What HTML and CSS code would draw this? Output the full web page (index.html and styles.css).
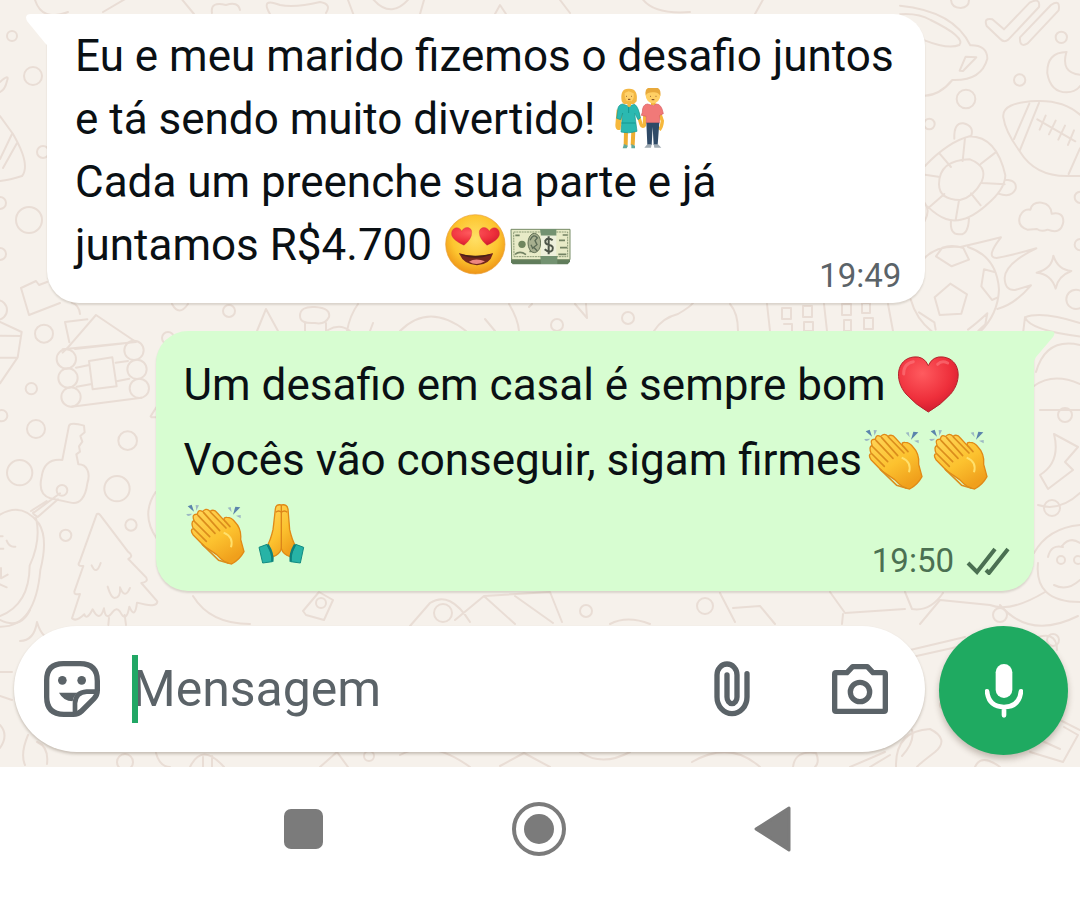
FILE: index.html
```html
<!DOCTYPE html>
<html lang="pt-BR">
<head>
<meta charset="utf-8">
<meta name="viewport" content="width=device-width, initial-scale=1">
<title>Conversa</title>
<link rel="stylesheet" href="styles.css">
</head>
<body>
<svg class="defs" aria-hidden="true">
  <defs>
    <linearGradient id="skin" x1="0" y1="0" x2="0.6" y2="1"><stop offset="0" stop-color="#ffd65c"/><stop offset="0.6" stop-color="#fcc22f"/><stop offset="1" stop-color="#f0a01c"/></linearGradient>
    <radialGradient id="face" cx="0.5" cy="0.4" r="0.6"><stop offset="0" stop-color="#ffe066"/><stop offset="0.65" stop-color="#fdc52f"/><stop offset="1" stop-color="#ee9417"/></radialGradient>
    <radialGradient id="red" cx="0.4" cy="0.3" r="0.8"><stop offset="0" stop-color="#ff5b5f"/><stop offset="0.6" stop-color="#ee2f3b"/><stop offset="1" stop-color="#c8162c"/></radialGradient>
    <symbol id="clap" viewBox="0 0 183 183">
      <g fill="#5b84ac"><path d="M5 7 17 2 24 23Z"/><path d="M163 10 148 8 141 32Z"/></g>
      <g fill="#9db9c4"><path d="M29 3 39 4 31 20Z"/><path d="M1 30Q5 42 19 29Z"/><path d="M125 11 134 9 137 25Z"/><path d="M150 35 164 33 164 43Z"/></g>
      <path fill="url(#skin)" stroke="#e18a16" stroke-width="4" stroke-linejoin="round" d="M24 49Q16 29 34 31Q36 14 50 23Q60 10 72 22Q84 14 94 27L117 52Q110 39 123 40Q137 40 147 54Q167 74 164 106L174 143Q160 168 137 180Q116 179 92 152L54 126L21 92Q11 76 22 74Q13 54 24 49Z"/>
      <g fill="none" stroke="#db8d1c" stroke-width="5" stroke-linecap="round"><path d="M24 75 61 112M24 51 71 98M36 34 87 88M53 26 101 80M73 24 120 72M118 52 132 68"/><path d="M49 121 98 169 126 177"/></g>
      <path d="M113 86Q144 99 135 130" fill="none" stroke="#ffe06c" stroke-width="6"/>
    </symbol>
    <symbol id="pray" viewBox="0 0 183 183">
      <path fill="url(#skin)" stroke="#e18a16" stroke-width="4" d="M91 3Q74-1 73 15Q69 53 66 77Q59 108 48 127L67 158Q86 151 91 134Q96 151 117 158L134 127Q123 108 116 77Q114 51 111 15Q108-1 91 3Z"/>
      <path d="M91 4V134M74 25Q83 17 91 25Q100 17 109 25" stroke="#dc861a" stroke-width="4" fill="none"/>
      <path fill="#27b3a6" stroke="#128b82" stroke-width="3" d="M48 121 24 130 35 177 64 173Q64 148 48 121ZM134 121 158 130 148 177 119 173Q118 148 134 121Z"/>
      <path d="M50 122Q67 149 64 173M132 122Q116 149 119 173" fill="none" stroke="#0d817b" stroke-width="7"/>
    </symbol>
    <symbol id="heart" viewBox="0 0 183 183">
      <path fill="url(#red)" stroke="#b3232c" stroke-width="3" d="M91 174Q52 152 24 120C-12 78-5 16 46 9Q78 5 91 35Q104 5 136 9C187 16 194 78 158 120Q130 152 91 174Z"/>
      <path d="M17 60Q16 29 46 23M119 31Q131 18 149 27" stroke="#ff8589" stroke-width="9" stroke-linecap="round" fill="none" opacity=".5"/>
    </symbol>
    <symbol id="love" viewBox="0 0 183 183">
      <circle cx="91" cy="91" r="89" fill="url(#face)" stroke="#e8a03b" stroke-width="2"/>
      <path fill="url(#red)" stroke="#c93535" d="M57 94Q15 75 20 55C22 38 45 36 50 52C58 34 82 39 80 56Q81 74 57 94ZM126 94Q103 74 103 56C102 39 125 34 133 52C139 36 161 38 163 55Q168 75 126 94Z"/>
      <path d="M42 117Q91 136 144 117Q137 151 96 154Q54 151 42 117Z" fill="#73271d"/>
      <path d="M51 124Q91 139 134 124L137 120Q91 130 46 120Z" fill="#472018"/>
      <path d="M72 143Q92 130 120 142Q95 157 72 143Z" fill="#ee8781"/>
    </symbol>
    <symbol id="money" viewBox="0 0 183 183">
      <path d="M3 133V145L8 151H173L180 143V133Z" fill="#607c5b"/>
      <path d="M3 46H180V137H5Z" fill="#e8ebc7" stroke="#768b67" stroke-width="3"/>
      <path d="M11 54H173V128H12Z" fill="none" stroke="#8d9c77" stroke-width="3" stroke-dasharray="6 2"/>
      <circle cx="36" cy="91" r="11" fill="#70865e"/>
      <path d="M16 64H29M15 121Q30 109 48 122M58 112H75M158 63H171M145 121H169M147 79H165M150 101H171" fill="none" stroke="#738363" stroke-width="5"/>
      <ellipse cx="73" cy="87" rx="19" ry="29" fill="#a7af8f" stroke="#667458" stroke-width="3"/>
      <path d="M60 79Q71 56 82 72L75 80 81 92 71 100 82 111M63 92 69 105" fill="none" stroke="#5c6b55" stroke-width="4"/>
      <path d="M90 45H139V65H93ZM91 126H142V150H93Z" fill="#739271"/>
      <path d="M93 65H139V126H93Z" fill="#edf0dc"/>
      <path d="M128 79Q113 67 106 80Q105 91 117 93Q133 96 127 109Q118 118 104 106M116 67V121" fill="none" stroke="#4d5549" stroke-width="6"/>
    </symbol>
    <symbol id="couple" viewBox="0 0 183 183">
      <path d="M54 129 53 172M76 129 74 172" stroke="#eeae32" stroke-width="12"/>
      <path d="M48 168 60 173 56 181H44ZM70 168 81 173 81 181H70Z" fill="#62a99c"/>
      <path d="M31 65 27 111Q27 122 33 121L39 73M87 69 99 109Q103 119 109 112L111 69M153 69 163 99Q162 116 154 126" stroke="#f6b83c" stroke-width="10" fill="none"/>
      <path d="M43 48Q29 51 29 68L26 91 38 95 44 75 39 132Q61 138 87 130L80 76 90 95 97 90Q92 57 80 49L62 54Z" fill="#2bb9b1" stroke="#189990" stroke-width="2"/>
      <path d="M40 105H82M62 56V75" stroke="#14978f" stroke-width="3"/>
      <path d="M41 40Q35 0 63 2Q91 1 86 40L78 48H47Z" fill="#f3b743"/>
      <path d="M50 15Q48 37 63 43Q80 39 77 16L62 10Z" fill="#ffd16a"/>
      <path d="M58 38H69V54L63 58 58 54ZM129 37H143V52H129Z" fill="#f4b840"/>
      <path d="M118 48Q103 49 103 73L100 82 115 85V105H154L155 82 166 77Q161 48 145 48L136 53Z" fill="#f17978" stroke="#d75b60" stroke-width="2"/>
      <path d="M115 104H154L149 171H137L134 117 131 171H118Z" fill="#2f4a67"/>
      <path d="M118 169H131L129 179H109ZM137 169H150L160 179H139Z" fill="#9faab3"/>
      <ellipse cx="135" cy="22" rx="22" ry="24" fill="#ffd064"/>
      <path d="M113 22Q108-4 134-2Q161-4 157 23Q149 12 136 13Q119 12 113 22Z" fill="#e8a93b"/>
      <path d="M55 25H57M69 25H71M126 25H128M143 25H145M60 34H67M131 35H139" stroke="#6e3d1c" stroke-width="3"/>
    </symbol>
  </defs>
</svg>

<main class="chat">
  <svg class="wallpaper" viewBox="0 0 1080 767" preserveAspectRatio="xMidYMin slice" aria-hidden="true">
    <!-- top edge and left margin -->
    <path d="M35 0Q42 22 68 12M103 12 132-5M180-3 194 14M212 13Q210 1 226 5Q238 1 240 10M270 14Q260-3 280 5Q295 8 320 2Q332 4 326 13M348 0 354 16M372-2Q392 22 412-5M424 0 420 14M495 14 500 5 506 14M560 0 570 13M640-5Q650 15 690 12M755 14 765-4"/>
    <circle cx="12" cy="36" r="5"/><circle cx="33" cy="76" r="9"/><circle cx="29" cy="220" r="13"/><circle cx="43" cy="152" r="6"/><circle cx="0" cy="203" r="6"/><circle cx="0" cy="254" r="6"/><circle cx="-3" cy="310" r="10"/>
    <path d="M0 82Q10 73 7 81 5 90 0 92M0 116 13 134Q31 165 22 176 10 180 0 181M0 159 12 134M3 168 17 143M21 288 36 281 39 285 47 282M21 288 29 315 60 303"/>
    <!-- right margin -->
    <g transform="translate(900 0) scale(.3333)" stroke-width="6">
      <path d="M0 17Q162 33 211 136Q262 135 262 176Q244 243 157 240Q119 286 74 287M0 43Q55 39 92 60Q198 112 178 135Q145 149 74 121M197 170 229 172 189 213 179 212Z"/>
      <path d="M153 0Q155 24 182 24 207 22 207 0M260 78Q250 52 277 58L312 88 389 8Q422-9 417 21L325 119Q312 129 301 117ZM360 112 453 15Q482-4 476 31L383 130Q358 145 360 112Z"/>
      <circle cx="484" cy="112" r="17"/><circle cx="359" cy="240" r="17"/><circle cx="198" cy="297" r="28"/><circle cx="88" cy="372" r="16"/><circle cx="541" cy="592" r="17"/><circle cx="541" cy="734" r="17"/><circle cx="528" cy="898" r="29"/>
      <path d="M500 156Q440 157 442 220 452 277 500 277 530 276 545 252M499 157Q482 219 540 224M540 344Q490 300 410 303 304 307 310 352 316 395 360 455 405 528 500 528H545M388 311 342 417M417 309 359 453M506 522 540 445M412 358 526 424M437 347 419 389M467 362 447 403M495 377 475 419M522 391 504 435"/>
      <path d="M75 498Q145 425 209 409 290 410 316 526 315 570 257 617 190 675 138 657 112 648 83 620M117 553Q117 480 210 478 265 500 245 545 220 591 180 600 118 600 117 553M195 414 188 483M286 458 242 492M314 553 246 549M213 580 242 616M177 601 167 660M133 582 85 624M115 530 75 524M119 461 153 501M163 416Q161 367 190 370 223 378 214 407M316 539Q352 540 347 567 335 595 295 581M153 661Q149 706 180 703 205 704 207 654M74 609Q92 631 74 663"/>
      <path d="M382 689Q350 678 360 648 371 625 391 629 397 605 425 608 453 612 455 641 491 634 490 666 483 705 443 689 424 697 411 687Z"/>
      <path d="M74 774Q111 735 181 741 240 728 303 712 255 773 290 774 336 766 409 745 316 790 314 834 315 872 345 870L393 856Q345 913 292 927M204 741Q291 770 297 869 294 942 241 995M32 898Q48 957 96 995M108 769 127 743Q156 733 190 744L207 779 155 799ZM104 892 151 851 201 883 184 941 119 945ZM252 808 286 817M252 808 244 859 276 900 292 893M57 937 103 967 107 989M204 989Q230 970 262 940L256 973 235 992M410 818Q456 806 460 767 474 810 514 813 474 828 467 866 454 822 410 818M370 993 375 952Q424 932 540 969M375 952Q390 991 545 1010"/>
    </g>
    <!-- between the bubbles -->
    <path d="M172 304Q179 317 188 304M257 331 266 309 278 331M300 316Q300 306 315 307 331 308 329 317 325 325 315 323 300 324 300 316M305 323V332M326 323V332M328 330Q340 323 350 331M358 304Q350 315 347 331M370 331 373 323M400 331Q429 302 466 331M485 319 495 331M509 304Q518 319 519 331M529 307 532 304M575 304 587 318 586 304M654 331Q662 318 678 314 690 307 693 303M730 304Q738 313 738 331M767 304 770 331M782 308H791V319H782ZM784 324H792V333H784M803 306H812V317H803ZM804 322H813V331H804ZM824 304 827 331M842 304H851V315H842ZM844 320H851V331H844ZM862 303H870V313H862ZM864 318H873V329H864ZM888 304 893 331"/>
    <circle cx="229" cy="311" r="6"/><circle cx="557" cy="325" r="6"/><circle cx="628" cy="318" r="6"/><circle cx="168" cy="338" r="6"/>
    <!-- left scene: cabin, key, tree -->
    <g transform="translate(0 300) scale(.3333)" stroke-width="6">
      <path d="M0 66 65 96 53 172 0 250M0 107 63 108M0 173H51M188 158 204 142 288 45 408 126 188 148M208 127 195 66 262 58M225 147 375 130M228 203 268 195M230 260 275 252M347 188 384 183M350 244 388 236M267 183 337 172 350 259 278 268ZM215 320 425 293M240 42Q238 16 215 8"/>
      <circle cx="199" cy="177" r="29"/><circle cx="204" cy="234" r="29"/><circle cx="213" cy="291" r="29"/><circle cx="402" cy="151" r="29"/><circle cx="411" cy="208" r="29"/><circle cx="418" cy="265" r="29"/>
      <circle cx="132" cy="101" r="27"/><circle cx="94" cy="266" r="17"/><circle cx="5" cy="347" r="17"/><circle cx="108" cy="387" r="27"/><circle cx="59" cy="518" r="38"/><circle cx="383" cy="422" r="28"/><circle cx="351" cy="566" r="38"/><circle cx="393" cy="675" r="17"/><circle cx="197" cy="706" r="17"/><circle cx="186" cy="571" r="16"/>
      <path d="M187 480 207 377Q213 366 252 377L254 397 241 408 247 425 237 439 240 455 229 463 235 493C262 493 272 520 262 550C257 590 240 615 212 608L151 595C120 585 119 555 125 530C130 495 150 476 187 480M180 580 104 636Q91 637 113 651L174 598M140 603 93 633"/>
      <path d="M0 644Q67 605 117 671 145 716 121 810 106 982 0 980M0 948Q88 914 89 797 124 720 108 654M0 709H8M0 746H10M20 722Q28 743 46 740M3 804 3 835 23 824M0 853 20 862"/>
      <path d="M290 643 239 785Q229 799 250 798L223 875Q222 886 240 882L216 955Q228 967 253 943 260 963 278 928 299 970 312 925 317 965 337 937 350 920 360 935 379 972 388 920 405 960 411 908 473 925 472 904L424 849Q446 846 439 833L385 777Q403 768 384 755L302 647Q295 638 290 643M275 796Q289 828 302 789M323 860Q333 893 343 894 363 893 360 862 375 900 390 864M327 954 325 975M374 945 378 975"/>
      <path d="M452 349 468 323M454 352H472M467 576Q421 645 470 715"/>
    </g>
    <!-- right side of the sent bubble -->
    <path d="M1040 410H1080M1040 475Q1061 462 1054 434L1078 447 1065 462 1073 470 1048 489ZM1034 386Q1053 372 1080 384M1036 372Q1046 337 1080 345M1034 553Q1048 528 1080 525M1038 563Q1034 602 1080 602M1048 557Q1051 544 1063 547M1054 585Q1067 592 1080 580M1062 546Q1070 536 1080 543M1038 505Q1060 512 1080 493"/>
    <circle cx="1065" cy="415" r="7"/><circle cx="1052" cy="508" r="8"/><circle cx="1061" cy="560" r="4"/><circle cx="1078" cy="560" r="4"/>
    <!-- strip above the composer -->
    <path d="M0 620Q20 630 30 610M20 641Q34 641 37 622 42 640 58 643M193 596Q210 624 250 624M303 611 319 592 333 600 324 620 306 615ZM410 626 430 603Q450 590 470 622M455 620 484 596 550 592 562 622M485 597 515 624M515 596 553 623M610 624Q627 615 650 624M720 593 735 622M733 608 760 606 775 624M830 592 845 613 905 609M843 614 842 624M905 592 912 609Q930 612 943 593M920 624 940 600 990 605Q1010 613 1045 592M910 650 965 637M912 657 966 645M1000 605Q1030 640 1078 616M1030 640Q1057 628 1057 650"/>
    <circle cx="443" cy="613" r="9"/><circle cx="705" cy="606" r="8"/><circle cx="586" cy="611" r="6"/><circle cx="321" cy="603" r="5"/><circle cx="1053" cy="640" r="6"/><circle cx="1000" cy="615" r="7"/>
    <!-- below the composer -->
    <path d="M0 672H12M0 696 12 700M0 725Q9 735 0 748M28 735Q20 754 25 765M37 742Q49 747 47 764M190 767Q202 742 224 767M203 757V767M212 756V767M156 753Q160 767 170 767M320 767 337 752 348 767M400 755Q430 738 470 767M500 766 524 753 550 767M580 752Q602 767 630 752M692 762Q730 740 760 767M793 767Q795 750 816 753 820 762 815 767M850 767 885 752M870 767 890 755M896 767Q895 731 930 729 950 739 935 752 918 765 917 767M912 730Q915 742 902 756M975 767Q981 753 1000 767M1060 720 1080 730M1064 727 1078 735 1063 762 1030 752M1040 740 1060 749"/>
    <circle cx="125" cy="762" r="8"/><circle cx="369" cy="756" r="5"/><circle cx="943" cy="705" r="3"/>
  </svg>

  <section class="messages" aria-label="Mensagens">
    <article class="bubble received">
      <svg class="tail" viewBox="0 0 22 32" aria-hidden="true"><path d="M22 0H5Q-2 0 1 7L19 29 22 32Z" fill="#fff"/></svg>
      <p class="text">Eu e meu marido fizemos o desafio juntos e tá sendo muito divertido! <svg class="emoji" role="img" aria-label="casal"><use href="#couple"/></svg><br>Cada um preenche sua parte e já juntamos R$4.700 <svg class="emoji" role="img" aria-label="apaixonado"><use href="#love"/></svg><svg class="emoji" role="img" aria-label="dinheiro"><use href="#money"/></svg></p>
      <footer class="meta"><time datetime="19:49">19:49</time></footer>
    </article>
    <article class="bubble sent">
      <svg class="tail" viewBox="0 0 22 32" aria-hidden="true"><path d="M0 0H17Q24 0 20 6L3 26 0 32Z" fill="#d7fdd1"/></svg>
      <p class="text">Um desafio em casal é sempre bom <svg class="emoji" role="img" aria-label="coração"><use href="#heart"/></svg><br>Vocês vão conseguir, sigam firmes<svg class="emoji" role="img" aria-label="palmas"><use href="#clap"/></svg><svg class="emoji" role="img" aria-label="palmas"><use href="#clap"/></svg><svg class="emoji" role="img" aria-label="palmas"><use href="#clap"/></svg><svg class="emoji" role="img" aria-label="mãos juntas"><use href="#pray"/></svg></p>
      <footer class="meta"><time datetime="19:50">19:50</time>
        <svg class="ticks" viewBox="0 0 44 28" role="img" aria-label="Entregue"><path d="M2 16 11 25 29 2M20 23 23 26 42 2" fill="none" stroke="#4b7052" stroke-width="4"/></svg>
      </footer>
    </article>
  </section>

  <form class="composer">
    <div class="field">
      <button class="icon" type="button" aria-label="Figurinhas">
        <svg width="56" height="56" viewBox="0 0 168 168"><path d="M58 8H108Q160 8 160 60V88Q160 103 150 113L113 150Q103 160 88 160H60Q8 160 8 108V58Q8 8 58 8Z" fill="none" stroke="#5b6368" stroke-width="16"/><circle cx="55" cy="58" r="13" fill="#5b6368"/><circle cx="113" cy="58" r="13" fill="#5b6368"/><path d="M45 95H101Q88 105 86 121 58 120 45 95Z" fill="#5b6368"/><path d="M93 158V126Q95 94 128 92H159" fill="none" stroke="#5b6368" stroke-width="14"/></svg>
      </button>
      <label class="entry"><span class="caret"></span><input type="text" placeholder="Mensagem" aria-label="Mensagem"></label>
      <button class="icon" type="button" aria-label="Anexar">
        <svg width="36" height="56" viewBox="0 0 108 168"><path d="M99 38V108A45 50 0 0 1 9 108V42A30 33 0 0 1 69 42V108A15 20 0 0 1 39 108V42" fill="none" stroke="#5b6368" stroke-width="16" stroke-linecap="round"/></svg>
      </button>
      <button class="icon" type="button" aria-label="Câmera">
        <svg width="56" height="50" viewBox="0 0 168 150"><path d="M12 26H45L62 8H106L123 26H156Q160 26 160 30V138Q160 142 156 142H12Q8 142 8 138V30Q8 26 12 26Z" fill="none" stroke="#5b6368" stroke-width="16" stroke-linejoin="round"/><circle cx="84" cy="84" r="29" fill="none" stroke="#5b6368" stroke-width="16"/></svg>
      </button>
    </div>
    <button class="mic" type="button" aria-label="Gravar áudio">
      <svg width="38" height="54" viewBox="0 0 114 162"><rect x="32" y="0" width="50" height="102" rx="25" fill="#fff"/><path d="M6 82Q11 129 57 129 103 129 108 82M57 129V154" fill="none" stroke="#fff" stroke-width="14" stroke-linecap="round"/></svg>
    </button>
  </form>
</main>

<nav class="system" aria-label="Navegação do sistema">
  <button type="button" aria-label="Recentes"><svg width="40" height="40" viewBox="0 0 40 40"><rect width="39" height="40" rx="7" fill="#7b7b7b"/></svg></button>
  <button type="button" aria-label="Início"><svg width="54" height="54" viewBox="0 0 54 54"><circle cx="27" cy="27" r="25" fill="none" stroke="#7b7b7b" stroke-width="4"/><circle cx="27" cy="27" r="15" fill="#7b7b7b"/></svg></button>
  <button type="button" aria-label="Voltar"><svg width="38" height="46" viewBox="0 0 38 46"><path d="M2 23 35 2V44Z" fill="#7b7b7b" stroke="#7b7b7b" stroke-width="3" stroke-linejoin="round"/></svg></button>
</nav>
</body>
</html>
```

FILE: styles.css
```css
* {
  box-sizing: border-box;
}

body {
  margin: 0;
  min-height: 100vh;
  display: flex;
  flex-direction: column;
  background: #fff;
  color: #0a1014;
  font-family: Roboto, "Liberation Sans", sans-serif;
}

button {
  display: flex;
  align-items: center;
  justify-content: center;
  padding: 0;
  border: 0;
  background: none;
}

.defs {
  position: absolute;
  width: 0;
  height: 0;
}

.chat {
  position: relative;
  display: flex;
  flex-direction: column;
  gap: 35px;
  padding: 14px 12px 12px 14px;
  background: #f6f1eb;
  overflow: hidden;
}

.wallpaper {
  position: absolute;
  inset: 0;
  width: 100%;
  height: 100%;
  fill: none;
  stroke: #e9ddd5;
  stroke-width: 2;
  stroke-linejoin: round;
  stroke-linecap: round;
}

.messages {
  position: relative;
  display: flex;
  flex-direction: column;
  gap: 28px;
  padding: 0 34px 0 33px;
}

.bubble {
  position: relative;
  display: grid;
  width: 89%;
  box-shadow: 0 2px 2px rgba(60, 40, 20, 0.14);
}

.text,
.meta {
  grid-area: 1 / 1;
}

.received {
  align-self: flex-start;
  padding: 11px 24px 26px 28px;
  border-radius: 0 32px 32px 32px;
  background: #fff;
}

.sent {
  align-self: flex-end;
  padding: 17px 24px 18px 28px;
  border-radius: 32px 0 32px 32px;
  background: #d7fdd1;
}

.tail {
  position: absolute;
  top: 0;
  width: 22px;
  height: 32px;
}

.received .tail {
  left: -21px;
}

.sent .tail {
  right: -21px;
}

.text {
  margin: 0;
  font-size: 44px;
  line-height: 63px;
}

.sent .text {
  line-height: 75px;
}

.emoji {
  width: 61px;
  height: 61px;
  margin: 0 2px;
  vertical-align: -15px;
  overflow: visible;
}

.meta {
  display: flex;
  align-items: center;
  gap: 12px;
  place-self: end;
  margin-bottom: -19px;
  color: #5b6368;
  font-size: 33px;
  line-height: 40px;
}

.sent .meta {
  margin-bottom: -8px;
  color: #4b7052;
}

.ticks {
  width: 44px;
  height: 28px;
}

.composer {
  position: relative;
  display: flex;
  align-items: flex-start;
  gap: 14px;
}

.field {
  flex: 1;
  display: flex;
  align-items: center;
  height: 126px;
  min-width: 0;
  padding: 0 37px 0 30px;
  border-radius: 63px;
  background: #fff;
  box-shadow: 0 2px 3px rgba(60, 40, 20, 0.25);
}

.entry {
  position: relative;
  flex: 1;
  display: flex;
  min-width: 0;
  margin-left: 32px;
}

.entry input {
  width: 100%;
  height: 68px;
  padding: 0;
  border: 0;
  outline: 0;
  background: none;
  color: #0a1014;
  font: 50px/68px Roboto, "Liberation Sans", sans-serif;
}

.entry input::placeholder {
  color: #5b6368;
  opacity: 1;
}

.caret {
  position: absolute;
  left: 0;
  width: 6px;
  height: 68px;
  background: #21a765;
}

.icon + .icon {
  margin-left: 82px;
}

.mic {
  width: 129px;
  height: 129px;
  border-radius: 50%;
  background: #1faa61;
  box-shadow: 0 4px 6px rgba(60, 40, 20, 0.28);
}

.system {
  flex: 1;
  display: flex;
  align-items: center;
  justify-content: center;
  gap: 188px;
  min-height: 124px;
  padding: 0 4px 6px 0;
}
```
